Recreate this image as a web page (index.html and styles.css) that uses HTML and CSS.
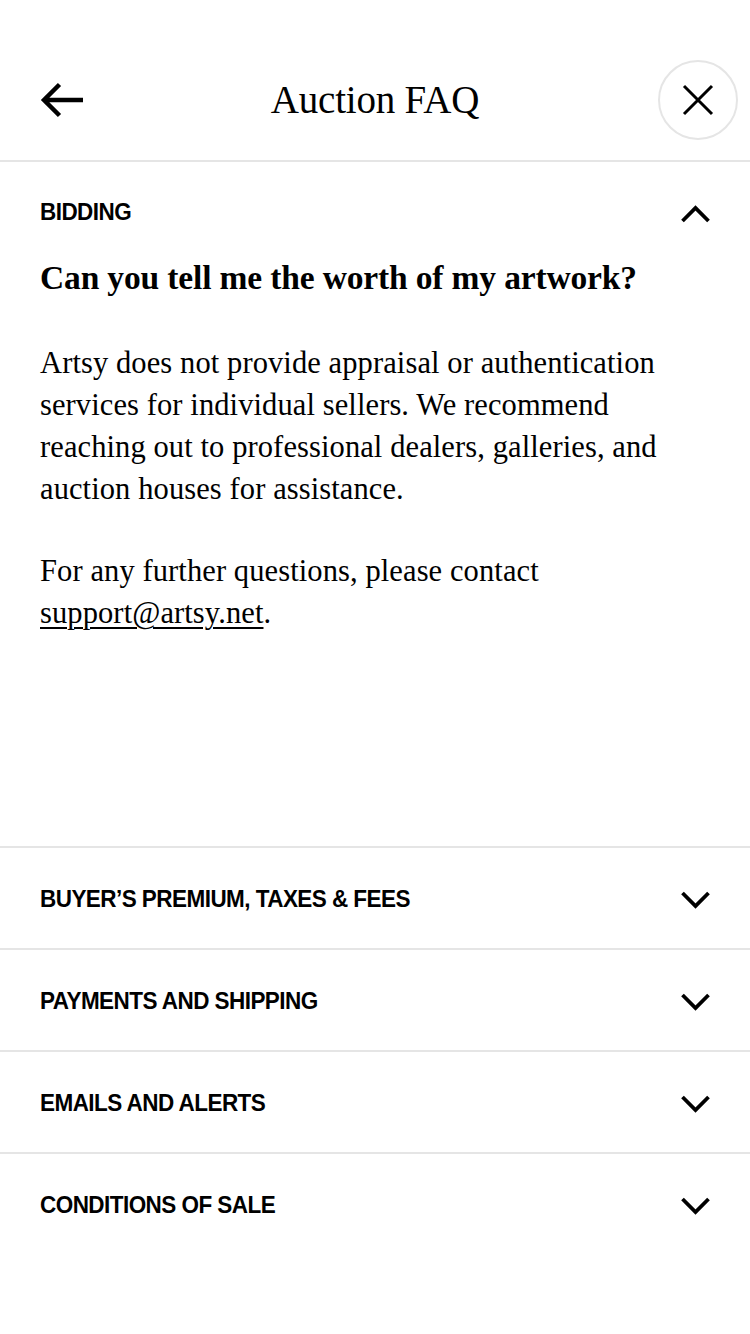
FILE: index.html
```html
<!DOCTYPE html>
<html lang="en">
<head>
<meta charset="utf-8">
<title>Auction FAQ</title>
<link rel="stylesheet" href="styles.css">
</head>
<body>
<div class="screen">
  <header class="topbar">
    <button class="back" aria-label="Back">
      <svg width="46" height="40" viewBox="0 0 46 40"><path d="M43 20H4M19.5 4.5L4 20L19.5 35.5" fill="none" stroke="#000" stroke-width="4.5" stroke-linejoin="miter"/></svg>
    </button>
    <h1 class="title">Auction FAQ</h1>
    <button class="close" aria-label="Close">
      <svg width="32" height="32" viewBox="0 0 32 32"><path d="M2 2L30 30M30 2L2 30" fill="none" stroke="#000" stroke-width="3"/></svg>
    </button>
  </header>

  <section class="faq-open">
    <div class="section-head">
      <span class="label">BIDDING</span>
      <svg class="chev" width="29" height="18" viewBox="0 0 29 18"><path d="M1.5 16L14.5 3L27.5 16" fill="none" stroke="#000" stroke-width="3.8"/></svg>
    </div>
    <h2 class="question">Can you tell me the worth of my artwork?</h2>
    <p class="answer">Artsy does not provide appraisal or authentication<br>services for individual sellers. We recommend<br>reaching out to professional dealers, galleries, and<br>auction houses for assistance.</p>
    <p class="answer">For any further questions, please contact<br><a href="#" class="mail">support@artsy.net</a>.</p>
  </section>

  <div class="faq-row"><span class="label">BUYER’S PREMIUM, TAXES &amp; FEES</span><svg class="chev" width="29" height="18" viewBox="0 0 29 18"><path d="M1.5 2L14.5 15L27.5 2" fill="none" stroke="#000" stroke-width="3.8"/></svg></div>
  <div class="faq-row"><span class="label">PAYMENTS AND SHIPPING</span><svg class="chev" width="29" height="18" viewBox="0 0 29 18"><path d="M1.5 2L14.5 15L27.5 2" fill="none" stroke="#000" stroke-width="3.8"/></svg></div>
  <div class="faq-row"><span class="label">EMAILS AND ALERTS</span><svg class="chev" width="29" height="18" viewBox="0 0 29 18"><path d="M1.5 2L14.5 15L27.5 2" fill="none" stroke="#000" stroke-width="3.8"/></svg></div>
  <div class="faq-row"><span class="label">CONDITIONS OF SALE</span><svg class="chev" width="29" height="18" viewBox="0 0 29 18"><path d="M1.5 2L14.5 15L27.5 2" fill="none" stroke="#000" stroke-width="3.8"/></svg></div>
</div>
</body>
</html>
```

FILE: styles.css
```css
* { box-sizing: border-box; }
html, body { margin: 0; padding: 0; background: #fff; }
body { color: #000; font-family: "Liberation Serif", "Times New Roman", serif; }

.screen { width: 750px; min-height: 1334px; background: #fff; }

.topbar {
  height: 162px;
  padding: 60px 12px 0 40px;
  display: grid;
  grid-template-columns: 1fr auto 1fr;
  align-items: start;
  border-bottom: 2px solid #e5e5e5;
}
.back, .close {
  border: 0; background: none; padding: 0; margin: 0; cursor: pointer;
  display: flex; align-items: center; justify-content: center;
}
.back { width: 80px; height: 80px; justify-content: flex-start; justify-self: start; }
.close {
  justify-self: end;
  width: 80px; height: 80px; border-radius: 50%;
  border: 2px solid #e5e5e5;
}
.title {
  margin: 0 0 0 -28px;
  font-weight: 400;
  font-size: 39px;
  line-height: 80px;
  letter-spacing: -0.2px;
}

.faq-open { padding: 0 40px; height: 684px; }
.section-head, .faq-row {
  display: flex;
  align-items: center;
  justify-content: space-between;
}
.section-head { height: 100px; padding-top: 2px; }
.label {
  font-family: "Liberation Sans", Arial, sans-serif;
  font-weight: 700;
  font-size: 22.5px;
  letter-spacing: -0.55px;
  transform: scaleY(1.06);
}
.chev { margin-right: 0; }
.section-head .chev { margin-top: 2px; }

.question {
  margin: -4px 0 0;
  font-size: 33.5px;
  font-weight: 700;
  line-height: 40px;
  letter-spacing: -0.15px;
}
.answer {
  margin: 44px 0 0;
  font-size: 30.5px;
  line-height: 42px;
  letter-spacing: 0.1px;
}
.answer + .answer { margin-top: 40px; }
.mail {
  color: #000;
  text-decoration: underline;
  text-decoration-thickness: 1.5px;
  text-underline-offset: 4px;
}

.faq-row {
  height: 102px;
  padding: 4px 40px 0;
  border-top: 2px solid #e5e5e5;
}
```
